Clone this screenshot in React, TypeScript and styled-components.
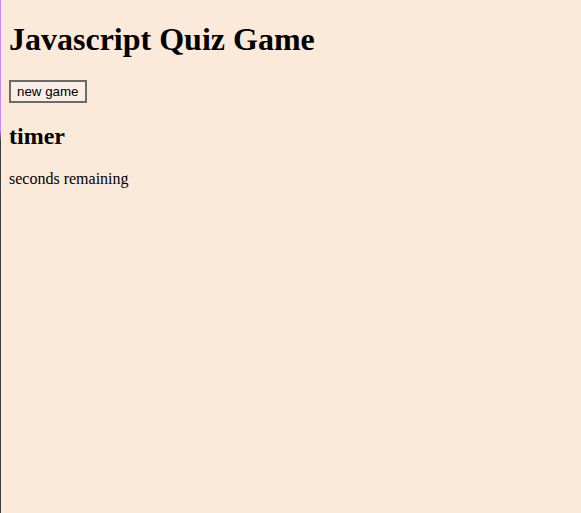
import React from "react";
import styled, { createGlobalStyle } from "styled-components";

const Global = createGlobalStyle`
  html {
    background: #fbe9d9;
    min-height: 100%;
    border-left: 1px solid transparent;
    border-image: linear-gradient(to bottom, #c98ce3 0, #c98ce3 130px, #3c3c3c 143px, #3c3c3c 100%) 1;
  }
  body {
    margin: 0 8px 8px;
    font-family: "Liberation Serif", "Times New Roman", serif;
    color: #000;
  }
`;

const Page = styled.main`
  display: block;
`;

const Title = styled.h1`
  font-size: 2em;
  font-weight: bold;
  margin: 21.44px 0;
`;

const Button = styled.button`
  font-family: "Liberation Sans", Arial, sans-serif;
  font-size: 13.333px;
  color: #000;
  background: #f9efe6;
  border: 2px solid #6b6b6b;
  padding: 2px 6px;
  margin: 0;
  line-height: normal;
`;

const SubTitle = styled.h2`
  font-size: 1.5em;
  font-weight: bold;
  margin: 0.83em 0;
`;

const Text = styled.p`
  font-size: 16px;
  margin: 1em 0;
`;

export default function App() {
  return (
    <>
      <Global />
      <Page>
        <Title>Javascript Quiz Game</Title>
        <Button>new game</Button>
        <SubTitle>timer</SubTitle>
        <Text>seconds remaining</Text>
      </Page>
    </>
  );
}
